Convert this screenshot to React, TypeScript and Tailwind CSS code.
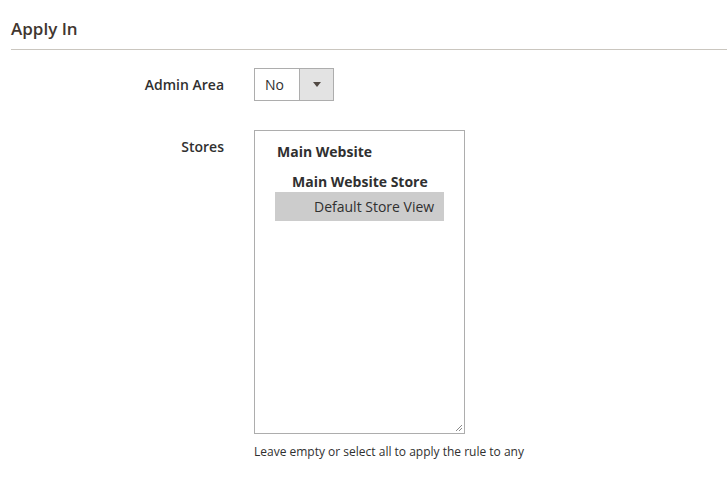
import React from "react";

function ResizeGrip() {
  return (
    <svg width="9" height="9" viewBox="0 0 9 9" className="absolute right-[1px] bottom-[1px]">
      <path d="M8 2 L2 8 M8 5 L5 8" stroke="#8a8a8a" strokeWidth="1" fill="none" />
    </svg>
  );
}

export default function App() {
  return (
    <div className="w-[727px] h-[496px] bg-white pl-[11px] font-['Open_Sans',sans-serif] text-[#303030]">
      {/* Section title */}
      <div className="h-[50px] border-b border-[#cac6bf] flex items-end pb-[12px]">
        <h2 className="text-[17px] font-semibold text-[#41362f] leading-none">Apply In</h2>
      </div>

      {/* Admin Area */}
      <div className="flex mt-[18px]">
        <label className="w-[213px] text-right text-[14px] font-semibold pt-[7px] leading-[19px]">Admin Area</label>
        <div className="ml-[30px] flex h-[33px] w-[80px] border border-[#adadad] bg-white">
          <span className="flex-1 text-[14px] pl-[10px] leading-[31px]">No</span>
          <span className="w-[34px] border-l border-[#adadad] bg-[#e3e3e3] flex items-center justify-center">
            <svg width="8" height="5" viewBox="0 0 8 5">
              <path d="M0 0 H8 L4 5 Z" fill="#514943" />
            </svg>
          </span>
        </div>
      </div>

      {/* Stores */}
      <div className="flex mt-[29px]">
        <label className="w-[213px] text-right text-[14px] font-semibold pt-[7px] leading-[19px]">Stores</label>
        <div className="ml-[30px]">
          <div className="relative w-[211px] h-[304px] border border-[#adadad] bg-white pt-[11px] pl-[20px] pr-[20px] text-[14px]">
            <div className="font-bold leading-[19px] pl-[2px]">Main Website</div>
            <div className="font-bold leading-[19px] pl-[17px] mt-[11px]">Main Website Store</div>
            <div className="bg-[#cccccc] h-[29px] mt-[1px] pl-[39px] leading-[29px]">Default Store View</div>
            <ResizeGrip />
          </div>
          <p className="text-[12px] mt-[10px] leading-[16px]">Leave empty or select all to apply the rule to any</p>
        </div>
      </div>
    </div>
  );
}
